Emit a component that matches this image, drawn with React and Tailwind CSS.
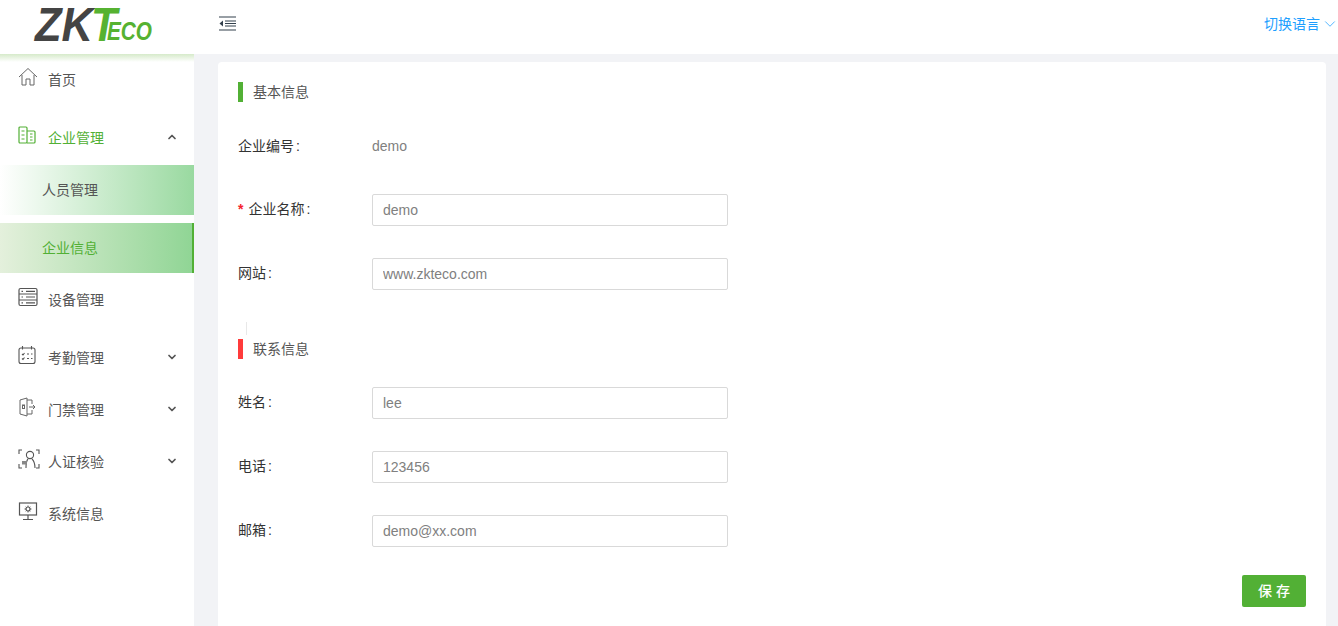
import { ChevronDown, ChevronUp } from 'lucide-react';

const fontStack = 'font-["Liberation_Sans","Noto_Sans_CJK_SC",sans-serif]';

const HomeIcon = () => (
  <svg width="20" height="20" viewBox="0 0 20 20" fill="none" stroke="#666" strokeWidth="1">
    <path d="M1 10 L10 1.5 L19 10" />
    <path d="M4 8 V18 H8 V12 H12 V18 H16 V8" />
  </svg>
);

const BuildingIcon = () => (
  <svg width="18" height="18" viewBox="0 0 18 18" fill="none" stroke="#52b035" strokeWidth="1.2">
    <rect x="1" y="1" width="8" height="16" rx="1" />
    <path d="M9 5 H16 A1 1 0 0 1 17 6 V16 A1 1 0 0 1 16 17 H9" />
    <path d="M3.5 5 H6.5 M3.5 9 H6.5 M3.5 13 H6.5 M12 8 H14.5 M12 11 H14.5 M12 14 H14.5" />
  </svg>
);

const ServerIcon = () => (
  <svg width="20" height="20" viewBox="0 0 20 20" fill="none" stroke="#555" strokeWidth="1.2">
    <rect x="1" y="1.5" width="18" height="17" rx="1.5" />
    <path d="M1 7 H19 M1 13 H19" />
    <path d="M3.5 4.3 H5 M8 4.3 H17 M3.5 10 H5 M8 10 H17 M3.5 15.8 H5 M8 15.8 H17" />
  </svg>
);

const CalendarIcon = () => (
  <svg width="18" height="20" viewBox="0 0 18 20" fill="none" stroke="#555" strokeWidth="1.1">
    <rect x="1" y="3" width="16" height="15.5" rx="2" />
    <path d="M4.5 1 V4.5 M13.5 1 V4.5" />
    <path d="M4 9 L5 10 L6.5 8 M9 9 H11 M13 9 H14.5 M4 13.5 L5 14.5 L6.5 12.5 M9 13.5 H11 M13 13.5 H14.5" />
  </svg>
);

const DoorIcon = () => (
  <svg width="18" height="20" viewBox="0 0 18 20" fill="none" stroke="#666" strokeWidth="1">
    <path d="M2 3 L9 1 V19 L2 17 Z" />
    <path d="M9 3 H14 V7 M14 13 V17 H9" />
    <rect x="4.5" y="8" width="2" height="3.5" />
    <path d="M11 10 H17 M15 8 L17 10 L15 12" />
  </svg>
);

const FaceIcon = () => (
  <svg width="22" height="21" viewBox="0 0 22 21" fill="none" stroke="#555" strokeWidth="1.1">
    <path d="M1 5 V1 H4 M18 1 H21 V5 M1 15 V19 H4 M18 19 H21 V15" />
    <circle cx="12" cy="6" r="3.6" />
    <path d="M8 19 C8 14 9 11 10 10 M14 10 C16 12 17 15 17 19" />
    <rect x="4" y="12" width="5" height="3.5" fill="#888" stroke="none" />
  </svg>
);

const MonitorIcon = () => (
  <svg width="20" height="19" viewBox="0 0 20 19" fill="none" stroke="#555" strokeWidth="1.2">
    <rect x="1.5" y="1" width="17" height="12" />
    <path d="M10 13 V17 M5 17.5 H15" />
    <circle cx="10" cy="7" r="2" />
    <path d="M10 3.5 V5 M10 9 V10.5 M6.5 7 H8 M12 7 H13.5 M7.7 4.7 L8.6 5.6 M11.4 8.4 L12.3 9.3 M12.3 4.7 L11.4 5.6 M8.6 8.4 L7.7 9.3" strokeWidth="0.9" />
  </svg>
);

const CollapseIcon = () => (
  <svg width="17" height="15" viewBox="0 0 17 15" fill="none" stroke="#33404d">
    <path d="M0 1 H17 M0 14 H17" strokeWidth="1.2" />
    <path d="M6 5 H17 M6 7.5 H17 M6 10 H17" strokeWidth="1" />
    <path d="M0.5 7.5 L4 4.5 V10.5 Z" fill="#33404d" stroke="none" />
  </svg>
);

// logo is drawn with svg text so the letters can be squeezed to its proportions
const Logo = () => (
  <svg width="194" height="54" viewBox="0 0 194 54" className='font-["Liberation_Sans",sans-serif] font-bold italic'>
    <text x="35" y="41" fontSize="49" fill="#444444" textLength="58" lengthAdjust="spacingAndGlyphs">ZK</text>
    <text x="91" y="41" fontSize="49" fill="#56b231" textLength="26" lengthAdjust="spacingAndGlyphs">T</text>
    <text x="107" y="40" fontSize="25" fill="#56b231" textLength="45" lengthAdjust="spacingAndGlyphs">ECO</text>
  </svg>
);

const MenuRow = ({ icon, label, arrow, active, className = '' }) => (
  <div className={`flex items-center pl-[18px] pr-[16px] ${className}`}>
    <span className="w-[30px] flex justify-start -mt-[4px]">{icon}</span>
    <span className={`flex-1 text-[14px] pt-[2px] ${active ? 'text-[#52b035]' : 'text-[#555]'}`}>{label}</span>
    {arrow === 'up' && <ChevronUp size={12} strokeWidth={3.5} className="text-[#555]" />}
    {arrow === 'down' && <ChevronDown size={12} strokeWidth={3.5} className="text-[#555]" />}
  </div>
);

const Field = ({ label, value, required }) => (
  <div className="flex items-center h-[32px]">
    <label className="w-[134px] text-[14px] text-[#333] -mt-[1px]">
      {required && <span className="text-[#f5222d] font-bold mr-[5px]">*</span>}
      {label}<span className="ml-[2px]">:</span>
    </label>
    <input
      readOnly
      value={value}
      className="w-[356px] h-[32px] border border-[#d9d9d9] rounded-[2px] px-[10px] text-[14px] text-[#808080] outline-none"
    />
  </div>
);

const SectionTitle = ({ color, children }) => (
  <div className="flex items-center h-[20px]">
    <span className={`w-[5px] h-[20px] ${color}`}></span>
    <span className="ml-[10px] text-[14px] text-[#555]">{children}</span>
  </div>
);

export default function App() {
  return (
    <div className={`w-[1338px] h-[626px] overflow-hidden flex flex-col bg-[#f2f3f6] ${fontStack}`}>
      <header className="h-[54px] shrink-0 bg-white flex items-center">
        <div className="w-[194px] h-full">
          <Logo />
        </div>
        <div className="pl-[25px] -mt-[7px]"><CollapseIcon /></div>
        <div className="ml-auto -mr-[1px] flex items-center gap-[1px] text-[14px] text-[#1e9fff] -mt-[6px]">
          切换语言
          <ChevronDown size={18} strokeWidth={1} />
        </div>
      </header>

      <div className="flex-1 flex min-h-0">
        <aside className="w-[194px] shrink-0 bg-white">
          <div className="h-[8px] -mb-[8px] bg-gradient-to-b from-[#d6eaca] to-white"></div>
          <MenuRow icon={<HomeIcon />} label="首页" className="h-[50px]" />
          <MenuRow icon={<BuildingIcon />} label="企业管理" arrow="up" active className="h-[52px] mt-[7px]" />
          <div className="h-[50px] mt-[2px] pl-[42px] pt-[1px] flex items-center text-[14px] text-[#555] bg-gradient-to-r from-white to-[#99d9a0]">
            人员管理
          </div>
          <div className="h-[50px] mt-[8px] pl-[42px] pt-[1px] flex items-center text-[14px] text-[#52b035] bg-gradient-to-r from-[#e4f0dc] to-[#90d595] border-r-2 border-[#52b035]">
            企业信息
          </div>
          <MenuRow icon={<ServerIcon />} label="设备管理" className="h-[52px]" />
          <MenuRow icon={<CalendarIcon />} label="考勤管理" arrow="down" className="h-[52px] mt-[6px]" />
          <MenuRow icon={<DoorIcon />} label="门禁管理" arrow="down" className="h-[52px]" />
          <MenuRow icon={<FaceIcon />} label="人证核验" arrow="down" className="h-[52px]" />
          <MenuRow icon={<MonitorIcon />} label="系统信息" className="h-[52px]" />
        </aside>

        <main className="flex-1 pl-[24px] pr-[12px] pt-[8px]">
          <div className="h-[600px] bg-white rounded-[4px] pl-[20px] pr-[20px] pt-[20px]">
            <SectionTitle color="bg-[#52b035]">基本信息</SectionTitle>

            <div className="flex items-center h-[32px] mt-[28px]">
              <span className="w-[134px] text-[14px] text-[#333]">企业编号<span className="ml-[2px]">:</span></span>
              <span className="text-[14px] text-[#808080]">demo</span>
            </div>

            <div className="mt-[32px] flex flex-col gap-[32px]">
              <Field label="企业名称" value="demo" required />
              <Field label="网站" value="www.zkteco.com" />
            </div>

            <div className="w-px h-[13px] bg-[#e8e8e8] ml-[8px] mt-[32px]"></div>
            <div className="mt-[4px]">
              <SectionTitle color="bg-[#ff3b3b]">联系信息</SectionTitle>
            </div>

            <div className="mt-[28px] flex flex-col gap-[32px]">
              <Field label="姓名" value="lee" />
              <Field label="电话" value="123456" />
              <Field label="邮箱" value="demo@xx.com" />
            </div>

            <div className="flex justify-end mt-[28px]">
              <button className="w-[64px] h-[32px] pl-[4px] bg-[#52b035] rounded-[2px] text-white text-[14px] font-medium tracking-[4px]">
                保存
              </button>
            </div>
          </div>
        </main>
      </div>
    </div>
  );
}
